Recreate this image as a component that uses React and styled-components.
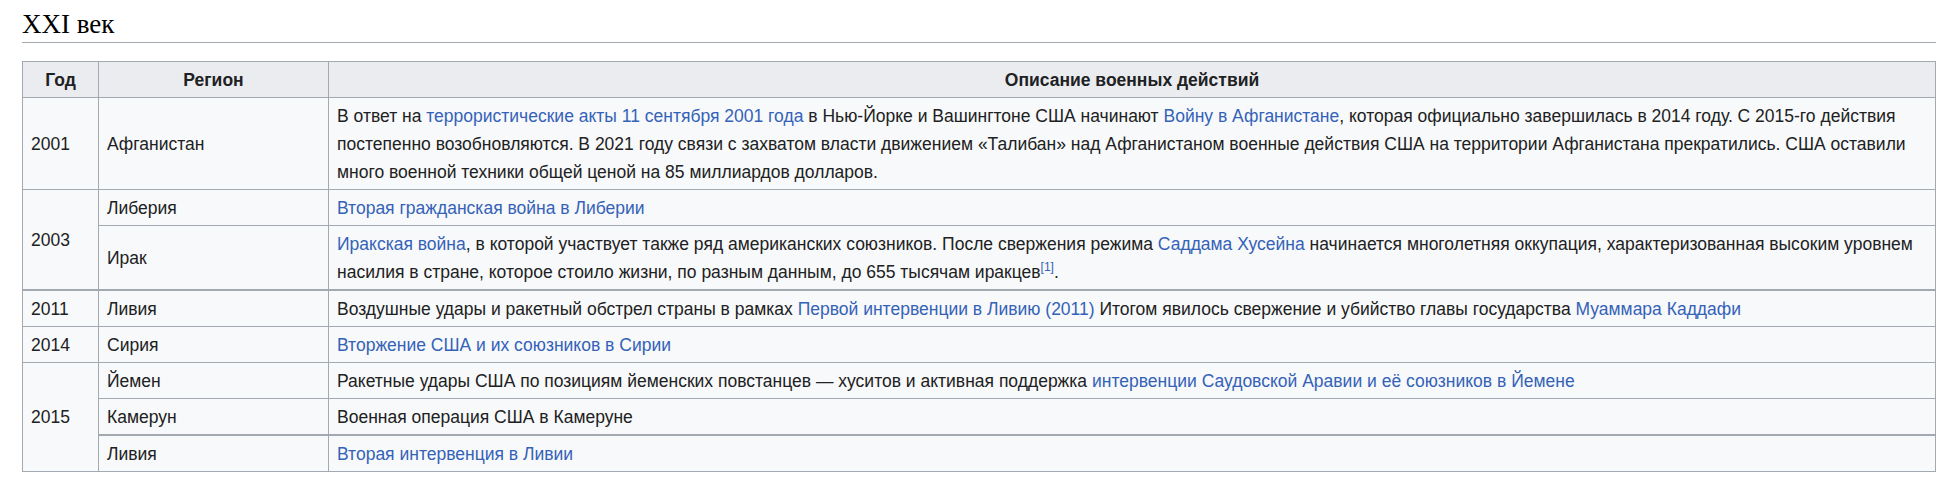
import React from "react";
import styled, { createGlobalStyle } from "styled-components";

const GlobalStyle = createGlobalStyle`
  html, body {
    margin: 0;
    padding: 0;
    background: #ffffff;
  }
  body {
    font-family: "Liberation Sans", Arial, sans-serif;
    color: #202122;
  }
`;

const Page = styled.div`
  padding: 7px 13px 0 22px;
`;

const Heading = styled.h2`
  margin: 0 0 18px;
  padding: 0 0 1px;
  font-family: "Liberation Serif", "Times New Roman", serif;
  font-size: 27px;
  font-weight: normal;
  line-height: 34px;
  color: #000;
  border-bottom: 1px solid #a2a9b1;
`;

const Table = styled.table`
  width: 100%;
  border-collapse: collapse;
  table-layout: fixed;
  background: #f8f9fa;
  border: 1px solid #a2a9b1;
  font-size: 17.5px;
  line-height: 28px;
  color: #202122;
`;

const Th = styled.th`
  background: #eaecf0;
  border: 1px solid #a2a9b1;
  padding: 3.5px 8px;
  font-weight: bold;
  text-align: center;
  color: #202122;
`;

const Row = styled.tr`
  border-top: ${(p) => (p.$thick ? "2px" : "1px")} solid #a2a9b1;
`;

const Td = styled.td`
  border: 1px solid #a2a9b1;
  border-top-width: inherit;
  padding: 3.5px 8px;
  vertical-align: middle;
  text-align: left;
`;

const Link = styled.a`
  color: #3462b8;
  text-decoration: none;
`;

const Ref = styled.sup`
  font-size: 12px;
  line-height: 1;
  vertical-align: super;
  color: #3462b8;
`;

export default function App() {
  return (
    <>
      <GlobalStyle />
      <Page>
        <Heading>XXI век</Heading>
        <Table>
          <colgroup>
            <col style={{ width: 76 }} />
            <col style={{ width: 230 }} />
            <col />
          </colgroup>
          <thead>
            <tr>
              <Th>Год</Th>
              <Th>Регион</Th>
              <Th>Описание военных действий</Th>
            </tr>
          </thead>
          <tbody>
            <Row>
              <Td>2001</Td>
              <Td>Афганистан</Td>
              <Td>
                В ответ на <Link href="#">террористические акты 11 сентября 2001 года</Link> в
                Нью-Йорке и Вашингтоне США начинают <Link href="#">Войну в Афганистане</Link>,
                которая официально завершилась в 2014 году. С 2015-го действия постепенно
                возобновляются. В 2021 году связи с захватом власти движением «Талибан» над
                Афганистаном военные действия США на территории Афганистана прекратились. США
                оставили много военной техники общей ценой на 85 миллиардов долларов.
              </Td>
            </Row>
            <Row>
              <Td rowSpan={2}>2003</Td>
              <Td>Либерия</Td>
              <Td>
                <Link href="#">Вторая гражданская война в Либерии</Link>
              </Td>
            </Row>
            <Row>
              <Td>Ирак</Td>
              <Td>
                <Link href="#">Иракская война</Link>, в которой участвует также ряд
                американских союзников. После свержения режима{" "}
                <Link href="#">Саддама Хусейна</Link> начинается многолетняя оккупация,
                характеризованная высоким уровнем насилия в стране, которое стоило жизни, по
                разным данным, до 655 тысячам иракцев<Ref>[1]</Ref>.
              </Td>
            </Row>
            <Row $thick>
              <Td>2011</Td>
              <Td>Ливия</Td>
              <Td>
                Воздушные удары и ракетный обстрел страны в рамках{" "}
                <Link href="#">Первой интервенции в Ливию (2011)</Link> Итогом явилось
                свержение и убийство главы государства <Link href="#">Муаммара Каддафи</Link>
              </Td>
            </Row>
            <Row>
              <Td>2014</Td>
              <Td>Сирия</Td>
              <Td>
                <Link href="#">Вторжение США и их союзников в Сирии</Link>
              </Td>
            </Row>
            <Row>
              <Td rowSpan={3}>2015</Td>
              <Td>Йемен</Td>
              <Td>
                Ракетные удары США по позициям йеменских повстанцев — хуситов и активная
                поддержка{" "}
                <Link href="#">интервенции Саудовской Аравии и её союзников в Йемене</Link>
              </Td>
            </Row>
            <Row>
              <Td>Камерун</Td>
              <Td>Военная операция США в Камеруне</Td>
            </Row>
            <Row $thick>
              <Td>Ливия</Td>
              <Td>
                <Link href="#">Вторая интервенция в Ливии</Link>
              </Td>
            </Row>
          </tbody>
        </Table>
      </Page>
    </>
  );
}
